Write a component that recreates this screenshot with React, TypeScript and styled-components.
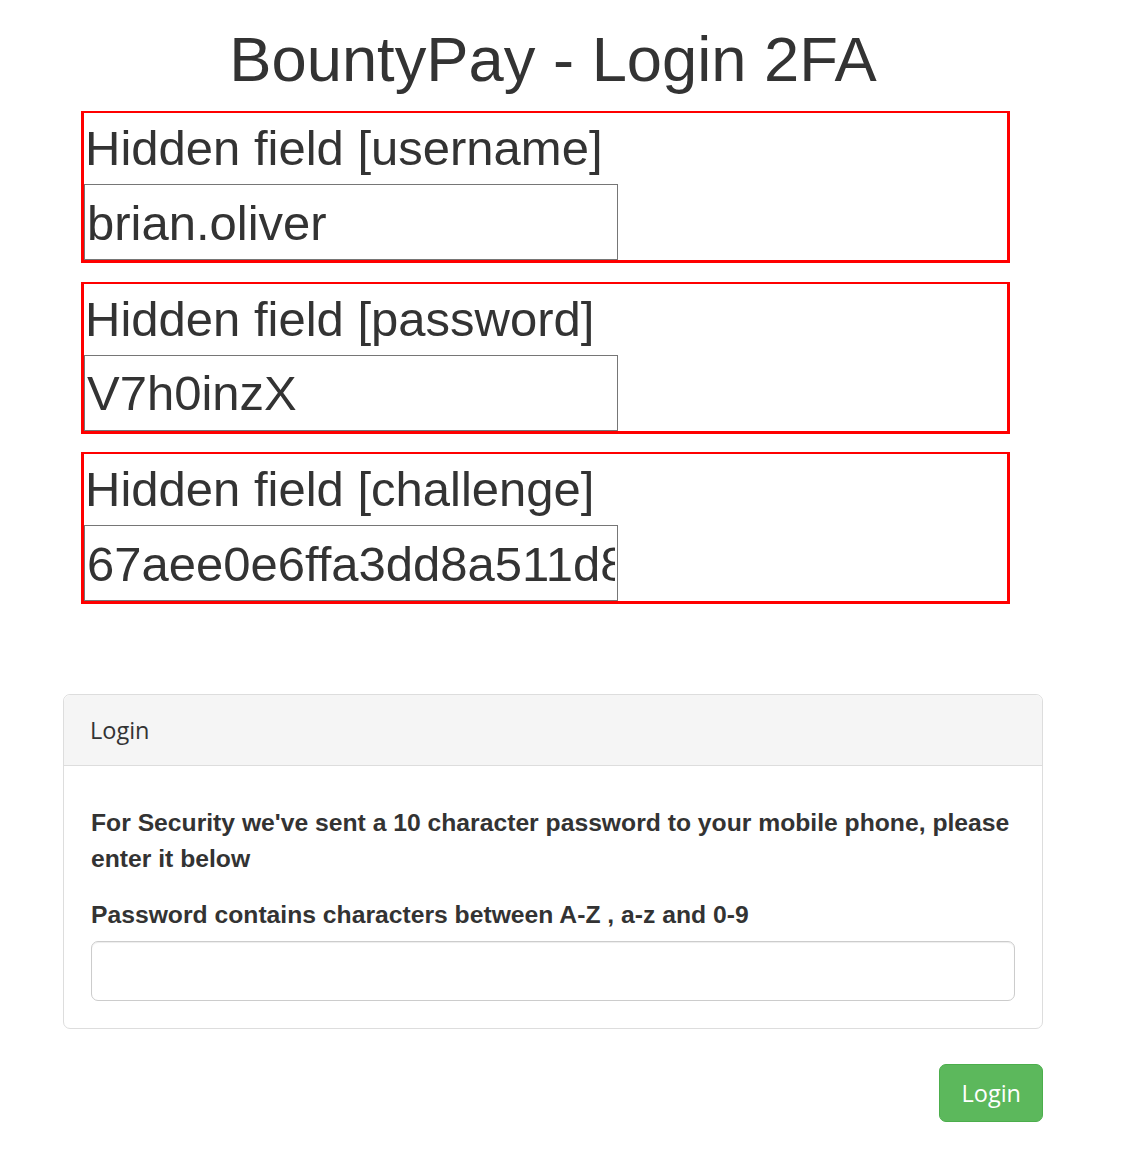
import React from 'react';
import styled, { createGlobalStyle } from 'styled-components';

const GlobalStyle = createGlobalStyle`
  body {
    margin: 0;
    background: #fff;
    color: #333;
    font-family: "Liberation Sans", Arial, sans-serif;
  }
  * {
    box-sizing: border-box;
  }
`;

const hiddenFields = [
  { name: 'username', value: 'brian.oliver' },
  { name: 'password', value: 'V7h0inzX' },
  { name: 'challenge', value: '67aee0e6ffa3dd8a511d8' },
];

const App = () => {
  return (
    <Page>
      <GlobalStyle />
      <Container>
        <Title>BountyPay - Login 2FA</Title>
        <HiddenList>
          {hiddenFields.map((field) => (
            <HiddenBox key={field.name}>
              <HiddenLabel>Hidden field [{field.name}]</HiddenLabel>
              <HiddenInput type='text' defaultValue={field.value} readOnly />
            </HiddenBox>
          ))}
        </HiddenList>
        <Panel>
          <PanelHeading>Login</PanelHeading>
          <PanelBody>
            <Notice>
              For Security we've sent a 10 character password to your mobile
              phone, please enter it below
            </Notice>
            <FieldLabel>
              Password contains characters between A-Z , a-z and 0-9
            </FieldLabel>
            <CodeInput type='text' />
          </PanelBody>
        </Panel>
        <Actions>
          <LoginButton type='button'>Login</LoginButton>
        </Actions>
      </Container>
    </Page>
  );
};

const Page = styled.div`
  width: 1129px;
  min-height: 1167px;
  padding-top: 23px;
`;

const Container = styled.div`
  width: 980px;
  margin-left: 63px;
`;

const Title = styled.h1`
  margin: 0;
  font-size: 63.3px;
  font-weight: 400;
  line-height: 72px;
  text-align: center;
  color: #333;
`;

const HiddenList = styled.div`
  display: flex;
  flex-direction: column;
  gap: 18.5px;
  margin: 16px 0 0 18px;
  width: 929px;
`;

const HiddenBox = styled.div`
  display: flex;
  flex-direction: column;
  align-items: flex-start;
  height: 152px;
  border: 3px solid #ff0000;
  border-top-width: 2px;
`;

const HiddenLabel = styled.label`
  font-size: 49px;
  line-height: 71px;
  height: 71px;
  margin-left: 1px;
  color: #333;
`;

const HiddenInput = styled.input`
  width: 534px;
  height: 77px;
  padding: 1px 2px 0;
  border: 1px solid #767676;
  font-family: "Liberation Sans", Arial, sans-serif;
  font-size: 49px;
  color: #333;
  background: #fff;
  outline: none;
`;

const Panel = styled.div`
  margin-top: 90px;
  border: 1px solid #ddd;
  border-radius: 7px;
  background: #fff;
`;

const PanelHeading = styled.div`
  padding: 17.5px 26px;
  background: #f5f5f5;
  border-bottom: 1px solid #ddd;
  border-radius: 7px 7px 0 0;
  font-family: "Open Sans", sans-serif;
  font-size: 23.5px;
  line-height: 35px;
  color: #333;
`;

const PanelBody = styled.div`
  padding: 39px 27px 27px;
`;

const Notice = styled.p`
  margin: 0 0 20px;
  font-size: 24.7px;
  font-weight: 700;
  line-height: 36px;
  color: #333;
`;

const FieldLabel = styled.label`
  display: block;
  margin-bottom: 9px;
  font-size: 24.7px;
  font-weight: 700;
  line-height: 35px;
  color: #333;
`;

const CodeInput = styled.input`
  display: block;
  width: 100%;
  height: 60px;
  padding: 10px 21px;
  border: 1px solid #ccc;
  border-radius: 7px;
  box-shadow: inset 0 1px 1px rgba(0, 0, 0, 0.075);
  font-size: 24.5px;
  color: #555;
  outline: none;
`;

const Actions = styled.div`
  display: flex;
  justify-content: flex-end;
  margin-top: 35px;
`;

const LoginButton = styled.button`
  padding: 10.5px 21px;
  border: 1px solid #4cae4c;
  border-radius: 7px;
  background: #5cb85c;
  color: #fff;
  font-family: "Open Sans", sans-serif;
  font-size: 23.5px;
  line-height: 35px;
  cursor: pointer;
`;

export default App;
